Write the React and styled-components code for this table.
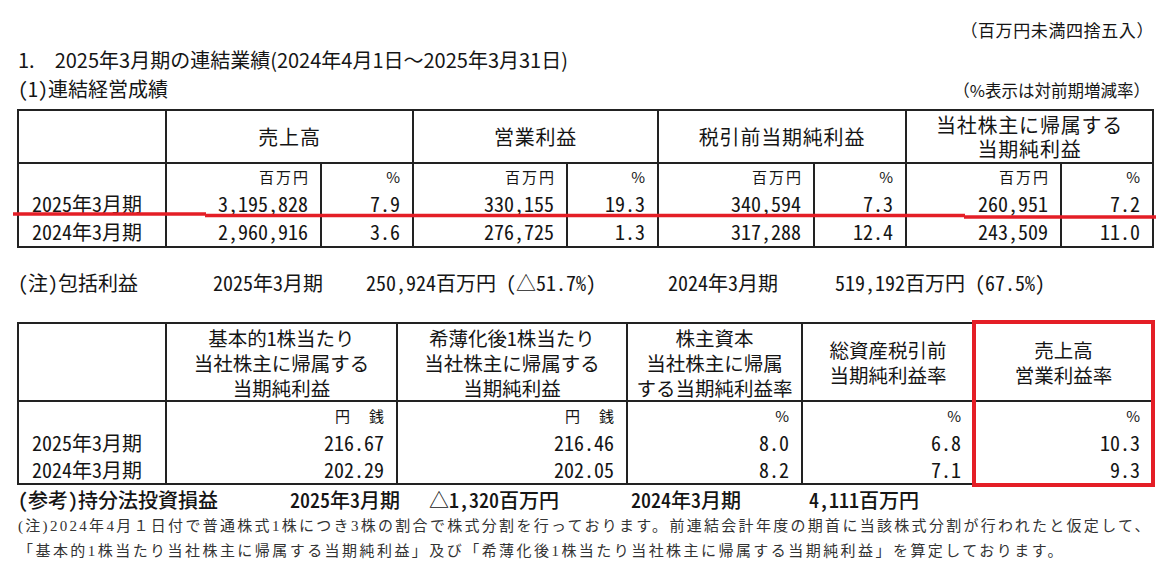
import React from 'react';
import styled, { createGlobalStyle } from 'styled-components';

const LINE = '#222';
const RED = '#e41e26';

const GlobalStyle = createGlobalStyle`
  html, body {
    margin: 0;
    padding: 0;
    background: #fff;
  }
  body {
    font-family: "Noto Sans CJK JP", "Noto Sans", sans-serif;
    color: #151515;
  }
`;

const Page = styled.div`
  width: 1176px;
  height: 570px;
  box-sizing: border-box;
  padding: 20px 0 0 17px;
  overflow: hidden;
`;

const TopNote = styled.div`
  width: 1137px;
  text-align: right;
  font-size: 17px;
  line-height: 20px;
  letter-spacing: 0.6px;
`;

const Title = styled.div`
  margin-top: 6px;
  padding-left: 1px;
  font-size: 20px;
  line-height: 28px;
  white-space: nowrap;
`;

const SubRow = styled.div`
  width: 1133px;
  margin-top: 1px;
  display: flex;
  justify-content: space-between;
  align-items: baseline;
  line-height: 28px;
`;

const SubTitle = styled.span`
  padding-left: 1px;
  font-size: 20px;
  font-feature-settings: "hwid" 1;
`;

const SubNote = styled.span`
  font-size: 16.5px;
`;

const TableWrap = styled.div`
  position: relative;
  width: 1135px;
  margin-top: ${({ $top }) => $top}px;
`;

const Table = styled.table`
  width: 1135px;
  table-layout: fixed;
  border-collapse: collapse;
  border: 2px solid ${LINE};
  font-size: 20px;
  font-feature-settings: "hwid" 1;
`;

const Col = styled.col`
  width: ${({ $w }) => $w}px;
`;

const Row = styled.tr`
  height: ${({ $h }) => $h}px;
`;

const HeadCell = styled.th`
  padding: 0;
  border: 2px solid ${LINE};
  font-weight: normal;
  font-size: ${({ $size }) => $size}px;
  line-height: ${({ $lh }) => $lh}px;
  letter-spacing: ${({ $ls }) => $ls}px;
  text-align: center;
  vertical-align: middle;
  white-space: nowrap;
`;

const Cell = styled.td`
  padding: 0 12px 0 13px;
  border-left: 2px solid ${LINE};
  border-right: 2px solid ${LINE};
  text-align: ${({ $left }) => ($left ? 'left' : 'right')};
  vertical-align: middle;
  line-height: 24px;
  white-space: nowrap;
`;

const UnitCell = styled(Cell)`
  padding-right: 10px;
  font-size: 15px;
  letter-spacing: 2px;
  font-feature-settings: normal;
`;

const Underline = styled.svg`
  position: absolute;
  left: -4px;
  top: 100px;
  overflow: visible;
  pointer-events: none;
`;

const Frame = styled.div`
  position: absolute;
  left: 955px;
  top: -2px;
  width: 183px;
  height: 167px;
  box-sizing: border-box;
  border: 4px solid ${RED};
  pointer-events: none;
`;

const InfoLine = styled.div`
  display: grid;
  grid-template-columns: ${({ $cols }) => $cols};
  margin-top: ${({ $top }) => $top}px;
  padding-left: 1px;
  font-size: 20px;
  line-height: ${({ $lh }) => $lh}px;
  white-space: nowrap;
  font-feature-settings: "hwid" 1;
`;

const StrongLine = styled(InfoLine)`
  font-weight: 500;
`;

const FootNote = styled.div`
  margin-top: ${({ $top }) => $top || 0}px;
  padding-left: 1px;
  font-family: "Liberation Serif", "Noto Sans CJK JP", serif;
  font-size: 15px;
  line-height: 25px;
  letter-spacing: ${({ $ls }) => $ls}px;
  color: #333;
  white-space: nowrap;
`;

const results = [
  {
    label: '2025年3月期',
    values: ['3,195,828', '7.9', '330,155', '19.3', '340,594', '7.3', '260,951', '7.2'],
  },
  {
    label: '2024年3月期',
    values: ['2,960,916', '3.6', '276,725', '1.3', '317,288', '12.4', '243,509', '11.0'],
  },
];

const resultHeads = [
  ['売上高'],
  ['営業利益'],
  ['税引前当期純利益'],
  ['当社株主に帰属する', '当期純利益'],
];

const ratioHeads = [
  ['基本的1株当たり', '当社株主に帰属する', '当期純利益'],
  ['希薄化後1株当たり', '当社株主に帰属する', '当期純利益'],
  ['株主資本', '当社株主に帰属', 'する当期純利益率'],
  ['総資産税引前', '当期純利益率'],
  ['売上高', '営業利益率'],
];

const ratioUnits = ['円　銭', '円　銭', '%', '%', '%'];

const ratios = [
  { label: '2025年3月期', values: ['216.67', '216.46', '8.0', '6.8', '10.3'] },
  { label: '2024年3月期', values: ['202.29', '202.05', '8.2', '7.1', '9.3'] },
];

const lines = (parts) =>
  parts.map((p, i) => (
    <React.Fragment key={i}>
      {i > 0 && <br />}
      {p}
    </React.Fragment>
  ));

function ResultsTable() {
  const widths = [148, 155, 92, 154, 91, 156, 92, 155, 92];
  return (
    <TableWrap $top={5}>
      <Table>
        <colgroup>
          {widths.map((w, i) => (
            <Col key={i} $w={w} />
          ))}
        </colgroup>
        <thead>
          <Row $h={53}>
            <HeadCell />
            {resultHeads.map((h, i) => (
              <HeadCell key={i} colSpan={2} $size={20} $lh={24} $ls={0.8}>
                {lines(h)}
              </HeadCell>
            ))}
          </Row>
        </thead>
        <tbody>
          <Row $h={26}>
            <Cell $left />
            {resultHeads.map((_, i) => (
              <React.Fragment key={i}>
                <UnitCell>百万円</UnitCell>
                <UnitCell>%</UnitCell>
              </React.Fragment>
            ))}
          </Row>
          {results.map((r) => (
            <Row key={r.label} $h={29}>
              <Cell $left>{r.label}</Cell>
              {r.values.map((v, i) => (
                <Cell key={i}>{v}</Cell>
              ))}
            </Row>
          ))}
        </tbody>
      </Table>
      <Underline width="1144" height="12">
        <g stroke={RED} strokeWidth="3.5">
          <line x1="0" y1="5" x2="193" y2="5" />
          <line x1="192" y1="6.5" x2="952" y2="6.5" />
          <line x1="951" y1="8" x2="1143" y2="8" />
        </g>
      </Underline>
    </TableWrap>
  );
}

function RatioTable() {
  const widths = [148, 231, 230, 175, 172, 179];
  return (
    <TableWrap $top={25}>
      <Table>
        <colgroup>
          {widths.map((w, i) => (
            <Col key={i} $w={w} />
          ))}
        </colgroup>
        <thead>
          <Row $h={78}>
            <HeadCell />
            {ratioHeads.map((h, i) => (
              <HeadCell key={i} $size={19.5} $lh={25} $ls={0}>
                {lines(h)}
              </HeadCell>
            ))}
          </Row>
        </thead>
        <tbody>
          <Row $h={28}>
            <Cell $left />
            {ratioUnits.map((u, i) => (
              <UnitCell key={i}>{u}</UnitCell>
            ))}
          </Row>
          {ratios.map((r, ri) => (
            <Row key={r.label} $h={ri === 0 ? 27 : 28}>
              <Cell $left>{r.label}</Cell>
              {r.values.map((v, i) => (
                <Cell key={i}>{v}</Cell>
              ))}
            </Row>
          ))}
        </tbody>
      </Table>
      <Frame />
    </TableWrap>
  );
}

export default function App() {
  return (
    <>
      <GlobalStyle />
      <Page>
        <TopNote>（百万円未満四捨五入）</TopNote>
        <Title>1.　2025年3月期の連結業績(2024年4月1日～2025年3月31日)</Title>
        <SubRow>
          <SubTitle>(1)連結経営成績</SubTitle>
          <SubNote>（%表示は対前期増減率）</SubNote>
        </SubRow>
        <ResultsTable />
        <InfoLine $cols="195px 153px 302px 167px auto" $top={21} $lh={28}>
          <span>(注)包括利益</span>
          <span>2025年3月期</span>
          <span>250,924百万円 (△51.7%)</span>
          <span>2024年3月期</span>
          <span>519,192百万円 (67.5%)</span>
        </InfoLine>
        <RatioTable />
        <StrongLine $cols="272px 139px 202px 178px auto" $top={2} $lh={26}>
          <span>(参考)持分法投資損益</span>
          <span>2025年3月期</span>
          <span>△1,320百万円</span>
          <span>2024年3月期</span>
          <span>4,111百万円</span>
        </StrongLine>
        <FootNote $top={1} $ls={2.3}>
          (注)2024年4月１日付で普通株式1株につき3株の割合で株式分割を行っております。前連結会計年度の期首に当該株式分割が行われたと仮定して、
        </FootNote>
        <FootNote $ls={2.45}>
          「基本的1株当たり当社株主に帰属する当期純利益」及び「希薄化後1株当たり当社株主に帰属する当期純利益」を算定しております。
        </FootNote>
      </Page>
    </>
  );
}
